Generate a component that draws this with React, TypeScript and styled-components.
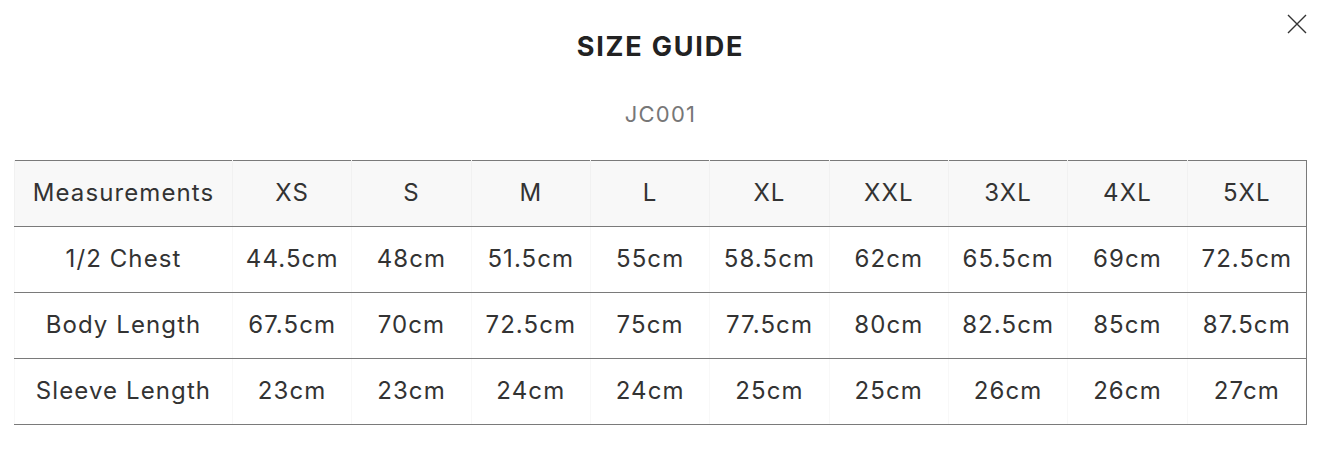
import React from 'react';
import styled, { createGlobalStyle } from 'styled-components';

const GlobalStyle = createGlobalStyle`
    body {
        margin: 0;
        background: #fff;
        font-family: Inter, "Liberation Sans", sans-serif;
        color: #333;
    }
`;

const sizes = ['XS', 'S', 'M', 'L', 'XL', 'XXL', '3XL', '4XL', '5XL'];

const rows: { label: string; values: string[] }[] = [
    { label: '1/2 Chest', values: ['44.5cm', '48cm', '51.5cm', '55cm', '58.5cm', '62cm', '65.5cm', '69cm', '72.5cm'] },
    { label: 'Body Length', values: ['67.5cm', '70cm', '72.5cm', '75cm', '77.5cm', '80cm', '82.5cm', '85cm', '87.5cm'] },
    { label: 'Sleeve Length', values: ['23cm', '23cm', '24cm', '24cm', '25cm', '25cm', '26cm', '26cm', '27cm'] },
];

export default function App() {
    return (
        <>
            <GlobalStyle />
            <Modal>
                <CloseButton aria-label="Close">
                    <svg width="20" height="20" viewBox="0 0 20 20">
                        <path d="M1 1L19 19M19 1L1 19" stroke="#333" strokeWidth="1.4" fill="none" />
                    </svg>
                </CloseButton>
                <Title>SIZE GUIDE</Title>
                <Code>JC001</Code>
                <Table>
                    <colgroup>
                        <LabelCol />
                        {sizes.map((s) => (
                            <col key={s} />
                        ))}
                    </colgroup>
                    <thead>
                        <tr>
                            <HeadCell>Measurements</HeadCell>
                            {sizes.map((s) => (
                                <HeadCell key={s}>{s}</HeadCell>
                            ))}
                        </tr>
                    </thead>
                    <tbody>
                        {rows.map((r) => (
                            <tr key={r.label}>
                                <Cell>{r.label}</Cell>
                                {r.values.map((v, i) => (
                                    <Cell key={i}>{v}</Cell>
                                ))}
                            </tr>
                        ))}
                    </tbody>
                </Table>
            </Modal>
        </>
    );
}

const Modal = styled.div`
    position: relative;
    padding: 28px 21px 40px 14px;
    display: flex;
    flex-direction: column;
    align-items: center;
`;

const CloseButton = styled.button`
    position: absolute;
    top: 14px;
    right: 21px;
    width: 20px;
    height: 20px;
    padding: 0;
    border: none;
    background: none;
    cursor: pointer;
    display: flex;
`;

const Title = styled.h2`
    margin: 0;
    font-size: 27px;
    font-weight: 700;
    line-height: 38px;
    letter-spacing: 1.8px;
    color: #222;
`;

const Code = styled.div`
    margin-top: 33px;
    font-size: 22px;
    line-height: 30px;
    letter-spacing: 1.2px;
    color: #777;
`;

const Table = styled.table`
    margin-top: 31px;
    width: 100%;
    table-layout: fixed;
    border-collapse: collapse;
    border: 1px solid #7a7a7a;
`;

const LabelCol = styled.col`
    width: 218px;
`;

const HeadCell = styled.th`
    height: 62px;
    padding: 0 4px 3px;
    background: #f8f8f8;
    font-size: 24px;
    font-weight: 400;
    letter-spacing: 1.1px;
    color: #333;
    text-align: center;
    white-space: nowrap;
    border-left: 1px solid #f1f1f1;
    border-bottom: 1px solid #7a7a7a;
`;

const Cell = styled.td`
    height: 62px;
    padding: 0 4px 3px;
    font-size: 24px;
    letter-spacing: 1.1px;
    color: #333;
    text-align: center;
    white-space: nowrap;
    border-left: 1px solid #f8f8f8;
    border-bottom: 1px solid #7a7a7a;
`;
